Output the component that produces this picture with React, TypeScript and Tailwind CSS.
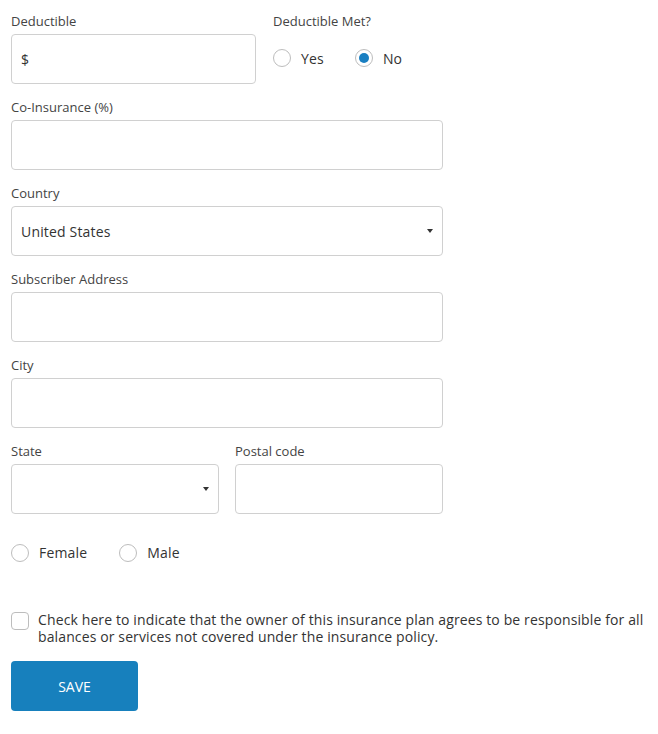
import React from "react";

function Radio({ checked, label }: { checked?: boolean; label: string }) {
  return (
    <label className="flex items-center gap-[10px] text-[14px] tracking-[0.17px] text-[#333]">
      <span className="flex h-[18px] w-[18px] items-center justify-center rounded-full border border-[#bdbdbd] bg-white">
        {checked && <span className="h-[10px] w-[10px] rounded-full bg-[#1a7fc1]" />}
      </span>
      <span>{label}</span>
    </label>
  );
}

function Label({ children }: { children: React.ReactNode }) {
  return <div className="mb-[4px] text-[13px] leading-[18px] text-[#444]">{children}</div>;
}

function Input({ value }: { value?: string }) {
  return (
    <div className="flex h-[50px] items-center rounded-[4px] border border-[#d0d0d0] bg-white px-[9px] text-[14px] tracking-[0.17px] text-[#333]">
      {value}
    </div>
  );
}

function Select({ value }: { value?: string }) {
  return (
    <div className="flex h-[50px] items-center justify-between rounded-[4px] border border-[#d0d0d0] bg-white pl-[9px] pr-[9px] text-[14px] tracking-[0.17px] text-[#333]">
      <span>{value}</span>
      <span className="h-0 w-0 border-x-[3.5px] border-t-[4px] border-x-transparent border-t-[#333]" />
    </div>
  );
}

export default function App() {
  return (
    <div className="min-h-[734px] bg-white pl-[11px] pr-[4px] pt-[12px]" style={{ fontFamily: '"Open Sans", sans-serif' }}>
      <div className="w-[432px]">
        <div className="flex gap-[17px]">
          <div className="w-[245px]">
            <Label>Deductible</Label>
            <Input value="$" />
          </div>
          <div>
            <Label>Deductible Met?</Label>
            <div className="flex h-[48px] items-center gap-[31px]">
              <Radio label="Yes" />
              <Radio label="No" checked />
            </div>
          </div>
        </div>
        <div className="mt-[14px]">
          <Label>Co-Insurance (%)</Label>
          <Input />
        </div>
        <div className="mt-[14px]">
          <Label>Country</Label>
          <Select value="United States" />
        </div>
        <div className="mt-[14px]">
          <Label>Subscriber Address</Label>
          <Input />
        </div>
        <div className="mt-[14px]">
          <Label>City</Label>
          <Input />
        </div>
        <div className="mt-[14px] flex gap-[16px]">
          <div className="w-[208px]">
            <Label>State</Label>
            <Select />
          </div>
          <div className="flex-1">
            <Label>Postal code</Label>
            <Input />
          </div>
        </div>
        <div className="mt-[28px] flex gap-[32px]">
          <Radio label="Female" />
          <Radio label="Male" />
        </div>
      </div>
      <div className="mt-[48px] flex items-start gap-[9px]">
        <span className="mt-[1px] h-[18px] w-[18px] shrink-0 rounded-[4px] border border-[#bdbdbd] bg-white" />
        <p className="text-[14px] leading-[17px] tracking-[0.12px] text-[#333]">
          Check here to indicate that the owner of this insurance plan agrees to be responsible for all balances or services not covered under the insurance policy.
        </p>
      </div>
      <button className="mt-[16px] flex h-[50px] w-[127px] items-center justify-center rounded-[4px] bg-[#1780bd] text-[14px] text-white">
        SAVE
      </button>
    </div>
  );
}
